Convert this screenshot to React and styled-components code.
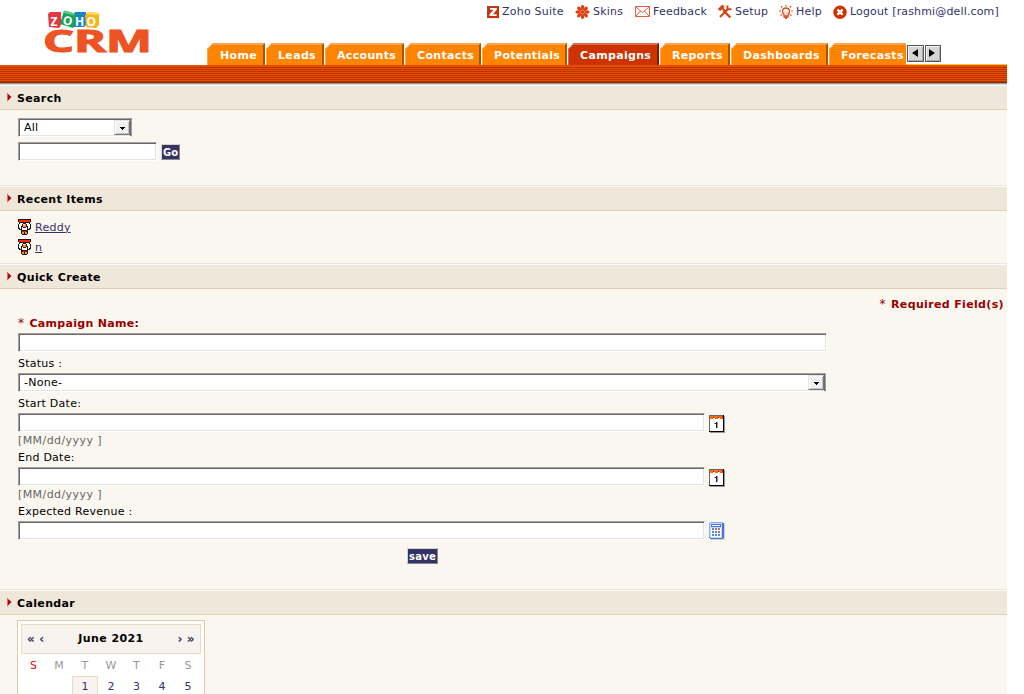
import React from "react";
import styled, { createGlobalStyle, css } from "styled-components";

const Global = createGlobalStyle`
  * { box-sizing: border-box; }
  body {
    margin: 0;
    background: #fff;
    color: #000;
    font: 11px/14px Verdana, "DejaVu Sans", sans-serif;
    letter-spacing: 0.25px;
    overflow: hidden;
  }
`;

const Page = styled.div`
  width: 1007px;
  height: 694px;
  overflow: hidden;
`;

const Header = styled.header`
  display: flex;
  height: 65px;
`;

const LogoBox = styled.div`
  width: 207px;
  flex: none;
`;

const HeaderMain = styled.div`
  flex: 1;
  display: flex;
  flex-direction: column;
  justify-content: space-between;
  min-width: 0;
`;

const TopNav = styled.nav`
  display: flex;
  height: 24px;
  padding-left: 280px;
`;

const TopLink = styled.a`
  display: flex;
  align-items: center;
  flex: none;
  width: ${(p) => p.$width}px;
  color: #333366;
  white-space: nowrap;
  letter-spacing: ${(p) => p.$track ?? 0.22}px;
  svg { flex: none; width: ${(p) => p.$icon}px; height: 24px; margin-right: 3px; }
`;

const TabRow = styled.div`
  display: flex;
  align-items: flex-end;
  height: 22px;
`;

const Tab = styled.div`
  position: relative;
  flex: none;
  width: ${(p) => p.$width}px;
  height: 22px;
  margin-right: ${(p) => (p.$cut ? 0 : 1)}px;
  padding: 4px 0 0 ${(p) => p.$pad || 11}px;
  overflow: hidden;
  color: #fff;
  font-weight: bold;
  white-space: nowrap;
  letter-spacing: 0.33px;
  background: ${(p) => (p.$active ? "#cc3300" : "#ff8400")};
  border-top: 2px solid ${(p) => (p.$active ? "#da6a48" : "#ffa44a")};
  border-left: 1px solid ${(p) => (p.$active ? "#da6a48" : "#ffa44a")};
  border-right: ${(p) => (p.$cut ? 0 : 2)}px solid ${(p) => (p.$active ? "#801c00" : "#a85400")};
  clip-path: polygon(0 6px, 6px 0, 100% 0, 100% 100%, 0 100%);
  &::before {
    content: "";
    position: absolute;
    left: -4px;
    top: 0;
    width: 11px;
    height: 2px;
    transform: rotate(-45deg);
    background: ${(p) => (p.$active ? "#e39a80" : "#ffc080")};
  }
`;

const TabScroll = styled.div`
  flex: 1;
  display: flex;
  gap: 1px;
  height: 22px;
  padding: 2px 0 0 1px;
  border-bottom: 1px solid #f4cc1c;
`;

const ScrollButton = styled.span`
  display: flex;
  align-items: center;
  justify-content: center;
  width: ${(p) => p.$width}px;
  height: 17px;
  padding: 0 2px 1px 0;
  background: #d6d6d6;
  border: 1px solid #555;
  box-shadow: inset 1px 1px #f4f4f4, inset -1px -1px #aaa;
`;

const Bar = styled.div`
  height: 20px;
  background:
    linear-gradient(#d8d8d8, #d8d8d8) 0 19px / 100% 1px no-repeat,
    linear-gradient(#a09c98, #a09c98) 0 18px / 100% 1px no-repeat,
    linear-gradient(#8c2200, #8c2200) 0 17px / 100% 1px no-repeat,
    linear-gradient(#e64e00, #e64e00) 0 0 / 100% 1px no-repeat,
    repeating-linear-gradient(#bc3200 0 1px, #e64e00 1px 2px);
`;

const Section = styled.section`
  height: ${(p) => p.$height}px;
  background: #faf7f0;
  overflow: hidden;
  border-bottom: 1px solid #ece4d8;
`;

const SectionTitle = styled.h2`
  display: flex;
  align-items: flex-start;
  height: 25px;
  margin: 0;
  padding: 6px 0 0 7px;
  border-top: 1px solid #fffdfa;
  border-bottom: 1px solid #e0d0b0;
  background: #efe7d9;
  font-size: 11px;
  line-height: 14px;
  letter-spacing: 0.35px;
  svg { margin: 1px 5px 0 0; }
`;

const sunken = css`
  background: #fff;
  border: 1px solid;
  border-color: #a0a0a0 #fff #fff #a0a0a0;
  box-shadow: inset 1px 1px #696969, inset -1px -1px #e3e3e3;
`;

const Input = styled.div`
  ${sunken}
  width: ${(p) => p.$width}px;
  height: 19px;
  flex: none;
`;

const SelectBox = styled(Input)`
  display: flex;
  align-items: center;
  justify-content: space-between;
  padding: 1px 1px 1px 5px;
  border-right-color: #a0a0a0;
  box-shadow: inset 1px 1px #696969, inset -1px 0 #696969, inset 0 -1px #e3e3e3;
`;

const SelectText = styled.span`
  padding-top: 1px;
`;

const Arrow = styled.span`
  display: flex;
  align-items: center;
  justify-content: center;
  width: 16px;
  height: 15px;
  padding-top: 1px;
  background: #f0f0f0;
  border: 1px solid;
  border-color: #e3e3e3 #777 #777 #e3e3e3;
  box-shadow: inset 1px 1px #fff, inset -1px -1px #c4c4c4;
`;

const SearchForm = styled.div`
  display: flex;
  flex-direction: column;
  gap: 5px;
  padding: 8px 18px;
`;

const Line = styled.div`
  display: flex;
  align-items: flex-start;
  gap: 4px;
  svg { margin-top: ${(p) => p.$drop || 0}px; margin-bottom: -4px; }
`;

const Button = styled.span`
  display: block;
  width: ${(p) => p.$width}px;
  height: 16px;
  border: 1px solid;
  border-color: #d8d4d0 #888 #888 #d8d4d0;
  background: #333366;
  color: #fff;
  font-weight: bold;
  font-size: 10px;
  line-height: 15px;
  text-align: center;
  white-space: nowrap;
`;

const GoButton = styled(Button)`
  margin-top: 2px;
  line-height: 16px;
  letter-spacing: 0;
`;

const RecentList = styled.div`
  padding: 6px 18px;
`;

const RecentItem = styled.div`
  display: flex;
  align-items: center;
  gap: 4px;
  height: 20px;
  a { padding-top: 1px; color: #333366; text-decoration: underline; text-underline-offset: 1px; }
`;

const Required = styled.div`
  padding: 9px 3px 0 0;
  height: 24px;
  text-align: right;
  font-weight: bold;
  letter-spacing: 0.35px;
  color: #990000;
`;

const Form = styled.div`
  padding-left: 18px;
`;

const Label = styled.div`
  height: ${(p) => p.$height || 21}px;
  padding-top: ${(p) => p.$top || 5}px;
  ${(p) => p.$required && "color: #990000; font-weight: bold; letter-spacing: 0.3px;"}
`;

const Hint = styled.div`
  height: 17px;
  padding-top: 2px;
  color: #666;
  letter-spacing: 0.42px;
`;

const SaveRow = styled.div`
  width: 809px;
  padding-top: 8px;
  display: flex;
  justify-content: center;
`;

const Star = styled.span`
  margin-right: 1px;
  font-weight: normal;
  font-size: 12px;
  line-height: 12px;
`;

const CalendarBox = styled.div`
  width: 188px;
  height: 100px;
  margin: 5px 0 0 17px;
  padding: 3px;
  border: 1px solid #dccda6;
  background: #fff;
`;

const Month = styled.div`
  display: flex;
  align-items: center;
  height: 30px;
  padding: 0 5px 0 5px;
  border: 1px solid #e8dcc4;
  background: #f8f3ee;
  font-weight: bold;
  letter-spacing: 0.4px;
  justify-content: space-between;
`;

const MonthNav = styled.span`
  display: flex;
  gap: 4px;
  color: #333366;
  font-size: 12px;
`;

const Week = styled.div`
  display: grid;
  grid-template-columns: 25px 26px 26px 26px 25px 26px 26px;
  height: 22px;
  text-align: center;
  line-height: ${(p) => p.$line}px;
  color: ${(p) => p.$color};
`;

const Day = styled.span`
  color: ${(p) => (p.$sunday ? "#ff0000" : "inherit")};
  ${(p) => p.$today && "border: 1px solid #e8dcc4; background: #f8f3ee; line-height: 19px; height: 22px;"}
`;

const Logo = () => (
  <svg width="160" height="60" viewBox="0 0 160 60">
    <g fontFamily="Open Sans, sans-serif" fontWeight="bold" fontSize="12" fill="#fff" textAnchor="middle" letterSpacing="0">
      <path d="M48 14 L50 12 H61 V25 L59 28 L49 27Z" fill="#e23840" />
      <path d="M73 15 L75 12 H86 V25 L84 27 H73Z" fill="#1484cc" />
      <path d="M85 15 L88 12 L99 13 V25 L96 28 L86 27Z" fill="#f9b517" />
      <path d="M87 14 L88 12 L99 13 L98 15Z" fill="#ffdc63" />
      <path d="M64 10.5 L75 13.5 L77 16 L73 28 L60 24Z" fill="#14a455" />
      <path d="M64 10.5 L75 13.5 L74 15.5 L64 13Z" fill="#61c78a" />
      <text x="54" y="26">Z</text>
      <text x="67.5" y="25" transform="rotate(14 67.5 21)">O</text>
      <text x="79.5" y="26">H</text>
      <text x="91.3" y="26">O</text>
    </g>
    <text
      x="43"
      y="51.6"
      fontFamily="Open Sans, sans-serif"
      fontWeight="bold"
      fontSize="29.5"
      letterSpacing="0"
      fill="#ee5423"
      stroke="#ee5423"
      strokeWidth="1.1"
      textLength="109"
      lengthAdjust="spacingAndGlyphs"
    >
      CRM
    </text>
  </svg>
);

const SuiteIcon = () => (
  <svg viewBox="0 0 12 24">
    <path d="M0 6H12V18H0Z" fill="#cc3300" />
    <path d="M0 6H12V7H1V18H0Z" fill="#8a4a5a" />
    <path d="M3 8H9.8V9.8L6 14.2H9.6V16H2.4V14.4L6.4 9.8H3Z" fill="#fff" />
  </svg>
);

const SkinsIcon = () => (
  <svg viewBox="0 0 14 24">
    <g fill="#dd4010">
      {[0, 45, 90, 135, 180, 225, 270, 315].map((a) => (
        <ellipse key={a} cx="7" cy="7.2" rx="1.7" ry="2.3" transform={`rotate(${a} 7 12)`} />
      ))}
      <circle cx="7" cy="12" r="3.6" />
    </g>
    <circle cx="7" cy="12" r="2.1" fill="none" stroke="#f0a080" strokeWidth=".7" />
  </svg>
);

const MailIcon = () => (
  <svg viewBox="0 0 15 24" fill="none" stroke="#e06040" strokeWidth="1">
    <path d="M.5 6.5H14.5V16.5H.5Z" />
    <path d="M.5 6.5L7.5 12.5L14.5 6.5M.5 16.5L5.5 11M14.5 16.5L9.5 11" />
  </svg>
);

const SetupIcon = () => (
  <svg viewBox="0 0 14 24" fill="none" stroke="#d94414">
    <path d="M2 17L10.5 8.5" strokeWidth="2.2" />
    <path d="M9.5 5.5V9.2H13.4" strokeWidth="2" />
    <path d="M5.5 10.5L12.3 17.5" strokeWidth="2.4" />
    <path d="M1 10L5.5 5.7" strokeWidth="3.2" />
    <path d="M4 8L7 11" strokeWidth="2" />
  </svg>
);

const HelpIcon = () => (
  <svg viewBox="0 0 14 24" fill="none" stroke="#dc4a1c">
    <path d="M5 14.5C2.4 12 3.2 8 7 8S11.6 12 9 14.5V17H5Z" strokeWidth="1.3" />
    <path d="M5 16H9M6 18.2H8" strokeWidth="1.6" />
    <path d="M7 5V6.5M2 6.2L3.3 7.5M12 6.2L10.7 7.5M0 11H2M12 11H14M1.5 15.5L3 14.4M12.5 15.5L11 14.4" strokeWidth="1.2" />
    <path d="M6 14V11.5M8 11.5V14" strokeWidth=".5" />
  </svg>
);

const LogoutIcon = () => (
  <svg viewBox="0 0 14 24">
    <circle cx="7" cy="12.2" r="6.7" fill="#cc3300" />
    <path d="M4.4 9.6L9.6 14.8M9.6 9.6L4.4 14.8" stroke="#fff" strokeWidth="2.2" />
  </svg>
);

const Marker = () => (
  <svg width="5" height="9" viewBox="0 0 5 9">
    <path d="M0 0L4.5 4L0 8.5Z" fill="#b8000c" />
    <path d="M.5 1V8" stroke="#cf7170" />
  </svg>
);

const PersonIcon = () => (
  <svg width="13" height="16" viewBox="0 0 13 16" shapeRendering="crispEdges">
    <path d="M0 0H13V3H12V5H13V10H12V11H10V15H9V16H4V15H3V11H1V10H0V5H1V3H0Z" fill="#161616" />
    <path d="M1 1H12V3H1Z" fill="#ff2800" />
    <path d="M2 4H11V5H12V9H11V10H10V11H3V10H2V9H1V5H2Z" fill="#fff" />
    <path d="M3 7H4V11H3ZM9 7H10V11H9Z" fill="#161616" />
    <path d="M5 4H8V5H9V8H8V9H5V8H4V5H5Z" fill="#4a1808" />
    <path d="M5 5H8V8H5Z" fill="#f0884a" />
    <path d="M5 5H7V6H5Z" fill="#fff0d0" />
    <path d="M4 12H9V13H4Z" fill="#b32000" />
    <path d="M4 13H6V15H4ZM7 13H9V15H7Z" fill="#ff9810" />
  </svg>
);

const DateIcon = () => (
  <svg width="16" height="18" viewBox="0 0 16 18" shapeRendering="crispEdges">
    <path d="M1 1H16V18H1Z" fill="#999" />
    <path d="M0 0H15V17H0Z" fill="#000" />
    <path d="M0 0H14V1H1V16H0Z" fill="#666" />
    <path d="M1 1H14V16H1Z" fill="#fff" />
    <path d="M1 1H14V4H1Z" fill="#ff6a10" />
    <path d="M13 1H14V4H13Z" fill="#ff1800" />
    <path d="M4 3H6V4H4ZM9 3H11V4H9Z" fill="#fff" />
    <path d="M4 2H5V3H4ZM9 2H10V3H9Z" fill="#333" />
    <path d="M7 7H8V13H7ZM6 8H7V9H6Z" fill="#222" />
    <path d="M8 7H9V13H8ZM5 8H6V9H5Z" fill="#999" />
  </svg>
);

const CalculatorIcon = () => (
  <svg width="16" height="18" viewBox="0 0 16 18" shapeRendering="crispEdges">
    <path d="M2 2H16V18H2Z" fill="#cbd2df" />
    <path d="M1 0H14V1H15V16H14V17H1V16H0V1H1Z" fill="#4f72cf" />
    <path d="M1 0H14V1H1V15H0V1H1Z" fill="#86b0f0" />
    <path d="M1 1H13V16H1Z" fill="#c4dcff" />
    <path d="M2 2H12V5H2Z" fill="#4f72cf" />
    <path d="M3 3H11V4H3Z" fill="#fff" />
    <path d="M2 6H12V15H2Z" fill="#f5faff" />
    {[6, 9, 12].map((y) =>
      [3, 6, 9].map((x) => (
        <rect key={`${x}-${y}`} x={x} y={y} width="2" height="2" fill={x === 9 && y === 6 ? "#f06a20" : "#6681c5"} />
      ))
    )}
  </svg>
);

const Caret = () => (
  <svg width="5" height="3" viewBox="0 0 5 3" shapeRendering="crispEdges">
    <path d="M0 0H5V1H4V2H3V3H2V2H1V1H0Z" />
  </svg>
);

const Select = ({ width, children }) => (
  <SelectBox $width={width}>
    <SelectText>{children}</SelectText>
    <Arrow><Caret /></Arrow>
  </SelectBox>
);

const Heading = ({ children }) => (
  <SectionTitle><Marker />{children}</SectionTitle>
);

const links = [
  { text: "Zoho Suite", width: 88, icon: 12, Icon: SuiteIcon },
  { text: "Skins", width: 60, icon: 15, Icon: SkinsIcon },
  { text: "Feedback", width: 83, icon: 15, Icon: MailIcon },
  { text: "Setup", width: 61, icon: 14, Icon: SetupIcon },
  { text: "Help", width: 54, icon: 14, Icon: HelpIcon },
  { text: "Logout [rashmi@dell.com]", width: 170, icon: 14, Icon: LogoutIcon, track: 0.15 },
];

const tabs = [
  { text: "Home", width: 58, pad: 12 },
  { text: "Leads", width: 58 },
  { text: "Accounts", width: 79 },
  { text: "Contacts", width: 76 },
  { text: "Potentials", width: 85 },
  { text: "Campaigns", width: 91, active: true },
  { text: "Reports", width: 70 },
  { text: "Dashboards", width: 97 },
  { text: "Forecasts", width: 77, cut: true },
];

export default function App() {
  return (
    <>
      <Global />
      <Page>
        <Header>
          <LogoBox><Logo /></LogoBox>
          <HeaderMain>
            <TopNav>
              {links.map(({ text, width, icon, Icon, track }) => (
                <TopLink key={text} $width={width} $icon={icon} $track={track}><Icon />{text}</TopLink>
              ))}
            </TopNav>
            <TabRow>
              {tabs.map((t) => (
                <Tab key={t.text} $width={t.width} $active={t.active} $cut={t.cut} $pad={t.pad}>{t.text}</Tab>
              ))}
              <TabScroll>
                <ScrollButton $width={17}><svg width="6" height="8"><path d="M6 0V8L0 4Z" /></svg></ScrollButton>
                <ScrollButton $width={16}><svg width="6" height="8"><path d="M0 0V8L6 4Z" /></svg></ScrollButton>
              </TabScroll>
            </TabRow>
          </HeaderMain>
        </Header>
        <Bar />
        <Section $height={101}>
          <Heading>Search</Heading>
          <SearchForm>
            <Select width={114}>All</Select>
            <Line><Input $width={139} /><GoButton $width={19}>Go</GoButton></Line>
          </SearchForm>
        </Section>
        <Section $height={78}>
          <Heading>Recent Items</Heading>
          <RecentList>
            <RecentItem><PersonIcon /><a>Reddy</a></RecentItem>
            <RecentItem><PersonIcon /><a>n</a></RecentItem>
          </RecentList>
        </Section>
        <Section $height={326}>
          <Heading>Quick Create</Heading>
          <Required><Star>*</Star> Required Field(s)</Required>
          <Form>
            <Label $required $height={20} $top={4}><Star>*</Star> Campaign Name:</Label>
            <Input $width={809} />
            <Label>Status :</Label>
            <Select width={808}>-None-</Select>
            <Label>Start Date:</Label>
            <Line $drop={2}><Input $width={687} /><DateIcon /></Line>
            <Hint>[MM/dd/yyyy ]</Hint>
            <Label $height={18} $top={2}>End Date:</Label>
            <Line $drop={2}><Input $width={687} /><DateIcon /></Line>
            <Hint>[MM/dd/yyyy ]</Hint>
            <Label $height={18} $top={2}>Expected Revenue :</Label>
            <Line $drop={1}><Input $width={687} /><CalculatorIcon /></Line>
            <SaveRow><Button $width={31}>save</Button></SaveRow>
          </Form>
        </Section>
        <Section $height={105}>
          <Heading>Calendar</Heading>
          <CalendarBox>
            <Month>
              <MonthNav><span>«</span><span>‹</span></MonthNav>
              <span>June 2021</span>
              <MonthNav><span>›</span><span>»</span></MonthNav>
            </Month>
            <Week $line={23} $color="#999">
              {["S", "M", "T", "W", "T", "F", "S"].map((d, i) => <Day key={i} $sunday={i === 0}>{d}</Day>)}
            </Week>
            <Week $line={21} $color="#333366">
              <Day /><Day />
              {[1, 2, 3, 4, 5].map((d) => <Day key={d} $today={d === 1}>{d}</Day>)}
            </Week>
          </CalendarBox>
        </Section>
      </Page>
    </>
  );
}
